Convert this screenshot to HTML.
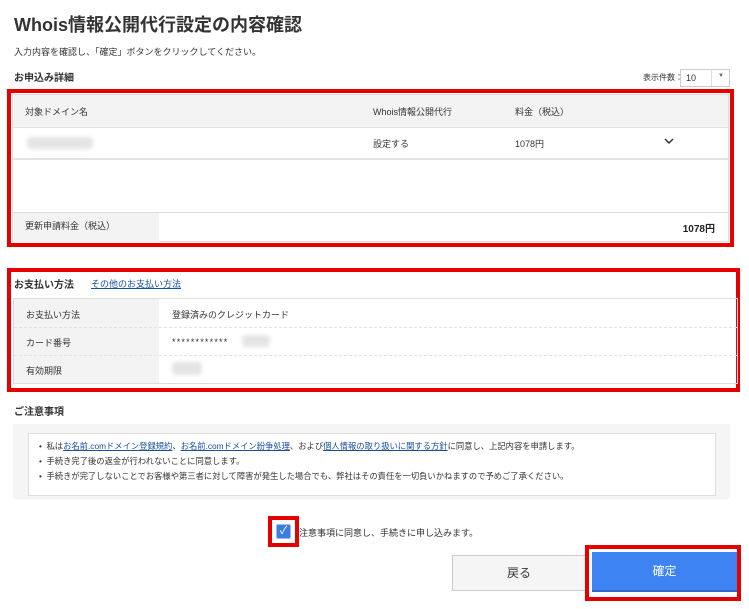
<!DOCTYPE html>
<html><head><meta charset="utf-8"><style>
*{margin:0;padding:0;box-sizing:border-box}
body{width:749px;height:609px;background:#fff;font-family:"Liberation Sans","Noto Sans CJK JP",sans-serif;color:#333;position:relative;overflow:hidden;font-size:9px}
.a{position:absolute;white-space:nowrap}
.red{position:absolute;border:4px solid #e60000}
a{color:#1a4fa0;text-decoration:underline}
.blur{position:absolute;background:#e4e4e4;border-radius:4px;filter:blur(2px)}
</style></head><body>
<div class="a" style="left:14px;top:11px;font-size:18px;font-weight:bold;color:#333">Whois情報公開代行設定の内容確認</div>
<div class="a" style="left:14px;top:45px">入力内容を確認し、「確定」ボタンをクリックしてください。</div>
<div class="a" style="left:14px;top:69px;font-weight:bold;font-size:10px">お申込み詳細</div>
<div class="a" style="left:643px;top:72px;font-size:8px">表示件数：</div>
<div class="a" style="left:680px;top:69px;width:50px;height:18px;border:1px solid #ccc;font-size:9px;padding:3px 5px">10<span style="position:absolute;right:5px;top:3px;font-size:6px;color:#666">▼</span><span style="position:absolute;left:30px;top:0;bottom:0;border-left:1px solid #ddd"></span></div>

<div class="red" style="left:7px;top:89px;width:727px;height:158px"></div>
<div class="a" style="left:12px;top:94px;width:717px;height:148px;border:1px solid #ddd">
 <div style="position:absolute;left:0;top:0;right:0;height:33px;background:#f3f3f3;border-bottom:1px solid #e0e0e0"></div>
 <div class="a" style="left:12px;top:10px">対象ドメイン名</div>
 <div class="a" style="left:360px;top:10px">Whois情報公開代行</div>
 <div class="a" style="left:502px;top:10px">料金（税込）</div>
 <div class="blur" style="left:14px;top:42px;width:66px;height:12px"></div>
 <div class="a" style="left:360px;top:42px">設定する</div>
 <div class="a" style="left:502px;top:42px">1078円</div>
 <svg class="a" style="left:651px;top:42px" width="10" height="8" viewBox="0 0 10 8"><path d="M1 2 L5 6 L9 2" fill="none" stroke="#333" stroke-width="1.5"/></svg>
 <div style="position:absolute;left:0;right:0;top:63px;border-top:2px solid #e3e3e3"></div>
 <div style="position:absolute;left:0;right:0;top:117px;height:30px;border-top:1px solid #ddd"></div>
 <div style="position:absolute;left:0;width:146px;top:118px;height:29px;background:#f3f3f3"></div>
 <div class="a" style="left:12px;top:124px">更新申請料金（税込）</div>
 <div class="a" style="right:13px;top:125px;font-weight:bold;font-size:10px;color:#222">1078円</div>
</div>

<div class="red" style="left:7px;top:268px;width:733px;height:124px"></div>
<div class="a" style="left:14px;top:276px;font-weight:bold;font-size:10px">お支払い方法</div>
<div class="a" style="left:91px;top:277px"><a>その他のお支払い方法</a></div>
<div class="a" style="left:13px;top:298px;width:725px;height:86px;border:1px solid #ddd">
 <div style="position:absolute;left:0;top:0;width:145px;bottom:0;background:#f3f3f3"></div>
 <div style="position:absolute;left:0;right:0;top:28px;border-top:1px dashed #e2e2e2"></div>
 <div style="position:absolute;left:0;right:0;top:56px;border-top:1px dashed #e2e2e2"></div>
 <div class="a" style="left:12px;top:9px">お支払い方法</div>
 <div class="a" style="left:158px;top:9px">登録済みのクレジットカード</div>
 <div class="a" style="left:12px;top:37px">カード番号</div>
 <div class="a" style="left:158px;top:38px;letter-spacing:1.2px">************</div>
 <div class="blur" style="left:228px;top:36px;width:28px;height:12px"></div>
 <div class="a" style="left:12px;top:65px">有効期限</div>
 <div class="blur" style="left:158px;top:63px;width:30px;height:13px"></div>
</div>

<div class="a" style="left:14px;top:403px;font-weight:bold;font-size:10px">ご注意事項</div>
<div class="a" style="left:13px;top:424px;width:717px;height:75px;background:#f5f5f5"></div>
<div class="a" style="left:28px;top:433px;width:688px;height:63px;background:#fff;border:1px solid #ddd;font-size:8.3px;line-height:15px;padding:5px 0 0 10px">
 <div>•&nbsp; 私は<a>お名前.comドメイン登録規約</a>、<a>お名前.comドメイン紛争処理</a>、および<a>個人情報の取り扱いに関する方針</a>に同意し、上記内容を申請します。</div>
 <div>•&nbsp; 手続き完了後の返金が行われないことに同意します。</div>
 <div>•&nbsp; 手続きが完了しないことでお客様や第三者に対して障害が発生した場合でも、弊社はその責任を一切負いかねますので予めご了承ください。</div>
</div>

<div class="red" style="left:268px;top:516px;width:31px;height:31px"></div>
<div class="a" style="left:276px;top:524px;width:15px;height:15px;background:#3b7de0;border-radius:2px;border:1px solid #9bbbe8;color:#fff;font-size:11px;text-align:center;line-height:13px">✓</div>
<div class="a" style="left:299px;top:526px">注意事項に同意し、手続きに申し込みます。</div>

<div class="a" style="left:452px;top:555px;width:134px;height:36px;background:#f5f5f5;border:1px solid #ccc;text-align:center;line-height:34px;font-size:12px;color:#333">戻る</div>
<div class="red" style="left:585px;top:545px;width:156px;height:56px"></div>
<div class="a" style="left:592px;top:552px;width:145px;height:40px;background:#3d84f2;border-bottom:2px solid #2d68c8;text-align:center;line-height:39px;font-size:12px;color:#fff">確定</div>
</body></html>
